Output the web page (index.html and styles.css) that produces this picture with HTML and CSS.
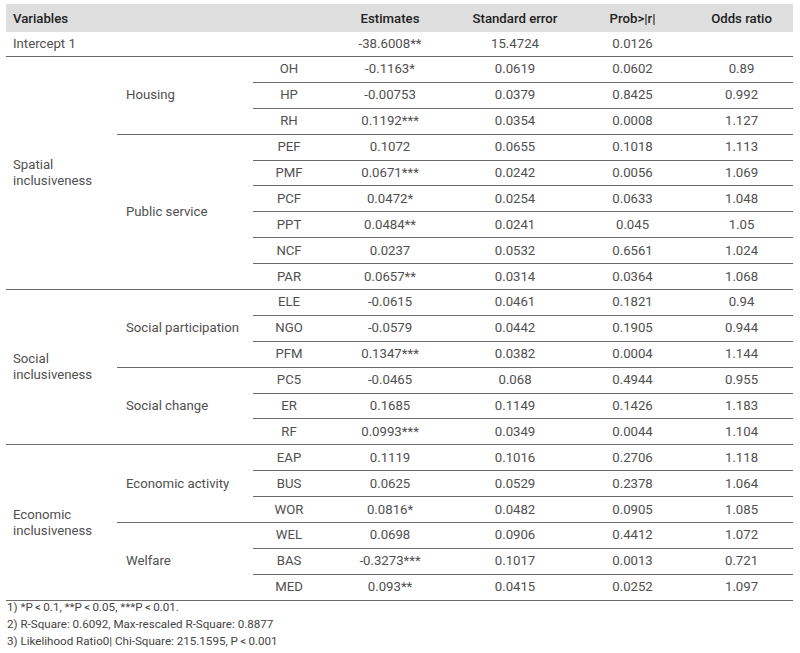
FILE: index.html
```html
<!DOCTYPE html>
<html>
<head>
<meta charset="utf-8">
<link rel="stylesheet" href="styles.css">
</head>
<body>
<table class="reg">
  <colgroup>
    <col class="c1"><col class="c2"><col class="c3"><col class="c4"><col class="c5"><col class="c6"><col class="c7">
  </colgroup>
  <thead>
    <tr class="head">
      <th class="left" colspan="3">Variables</th>
      <th>Estimates</th>
      <th>Standard error</th>
      <th>Prob&gt;|r|</th>
      <th>Odds ratio</th>
    </tr>
  </thead>
  <tbody>
    <tr class="icpt">
      <td class="left" colspan="3">Intercept 1</td>
      <td>-38.6008**</td><td>15.4724</td><td>0.0126</td><td></td>
    </tr>

    <tr><td class="grp" rowspan="9">Spatial<br>inclusiveness</td><td class="sub" rowspan="3">Housing</td>
      <td>OH</td><td>-0.1163*</td><td>0.0619</td><td>0.0602</td><td>0.89</td></tr>
    <tr><td>HP</td><td>-0.00753</td><td>0.0379</td><td>0.8425</td><td>0.992</td></tr>
    <tr><td>RH</td><td>0.1192***</td><td>0.0354</td><td>0.0008</td><td>1.127</td></tr>
    <tr><td class="sub" rowspan="6">Public service</td>
      <td>PEF</td><td>0.1072</td><td>0.0655</td><td>0.1018</td><td>1.113</td></tr>
    <tr><td>PMF</td><td>0.0671***</td><td>0.0242</td><td>0.0056</td><td>1.069</td></tr>
    <tr><td>PCF</td><td>0.0472*</td><td>0.0254</td><td>0.0633</td><td>1.048</td></tr>
    <tr><td>PPT</td><td>0.0484**</td><td>0.0241</td><td>0.045</td><td>1.05</td></tr>
    <tr><td>NCF</td><td>0.0237</td><td>0.0532</td><td>0.6561</td><td>1.024</td></tr>
    <tr><td>PAR</td><td>0.0657**</td><td>0.0314</td><td>0.0364</td><td>1.068</td></tr>

    <tr><td class="grp" rowspan="6">Social<br>inclusiveness</td><td class="sub" rowspan="3">Social participation</td>
      <td>ELE</td><td>-0.0615</td><td>0.0461</td><td>0.1821</td><td>0.94</td></tr>
    <tr><td>NGO</td><td>-0.0579</td><td>0.0442</td><td>0.1905</td><td>0.944</td></tr>
    <tr><td>PFM</td><td>0.1347***</td><td>0.0382</td><td>0.0004</td><td>1.144</td></tr>
    <tr><td class="sub" rowspan="3">Social change</td>
      <td>PC5</td><td>-0.0465</td><td>0.068</td><td>0.4944</td><td>0.955</td></tr>
    <tr><td>ER</td><td>0.1685</td><td>0.1149</td><td>0.1426</td><td>1.183</td></tr>
    <tr><td>RF</td><td>0.0993***</td><td>0.0349</td><td>0.0044</td><td>1.104</td></tr>

    <tr><td class="grp" rowspan="6">Economic<br>inclusiveness</td><td class="sub" rowspan="3">Economic activity</td>
      <td>EAP</td><td>0.1119</td><td>0.1016</td><td>0.2706</td><td>1.118</td></tr>
    <tr><td>BUS</td><td>0.0625</td><td>0.0529</td><td>0.2378</td><td>1.064</td></tr>
    <tr><td>WOR</td><td>0.0816*</td><td>0.0482</td><td>0.0905</td><td>1.085</td></tr>
    <tr><td class="sub" rowspan="3">Welfare</td>
      <td>WEL</td><td>0.0698</td><td>0.0906</td><td>0.4412</td><td>1.072</td></tr>
    <tr><td>BAS</td><td>-0.3273***</td><td>0.1017</td><td>0.0013</td><td>0.721</td></tr>
    <tr><td>MED</td><td>0.093**</td><td>0.0415</td><td>0.0252</td><td>1.097</td></tr>
  </tbody>
</table>
<div class="notes">
  <p>1) *P&#8201;&lt;&#8201;0.1, **P&#8201;&lt;&#8201;0.05, ***P&#8201;&lt;&#8201;0.01.</p>
  <p>2) R-Square: 0.6092, Max-rescaled R-Square: 0.8877</p>
  <p>3) Likelihood Ratio0| Chi-Square: 215.1595, P&#8201;&lt;&#8201;0.001</p>
</div>
</body>
</html>
```
FILE: styles.css
```css
html, body {
  margin: 0;
  background: #ffffff;
}
body {
  padding: 4px 7px 0 6px;
  font-family: Roboto, "Liberation Sans", sans-serif;
  font-size: 13.2px;
  color: #505050;
}
.reg {
  width: 787px;
  border-collapse: collapse;
  table-layout: fixed;
}
.c1 { width: 111px; }
.c2 { width: 136px; }
.c3 { width: 72px; }
.c4 { width: 130px; }
.c5 { width: 120px; }
.c6 { width: 115px; }
.c7 { width: 103px; }

.reg th {
  background: #dedede;
  color: #222;
  font-weight: 500;
  height: 28px;
  padding: 0;
  text-align: center;
}
.reg th.left {
  text-align: left;
  padding-left: 7px;
}
.reg td {
  height: 24.9px;
  padding: 0;
  text-align: center;
  border-bottom: 1px solid #6a6a6a;
  line-height: 16px;
}
.reg tr.icpt td {
  height: 24px;
}
.reg td.left {
  text-align: left;
  padding-left: 7px;
}
.reg td.grp {
  text-align: left;
  padding-left: 7px;
}
.reg td.sub {
  text-align: left;
  padding-left: 9px;
}
.notes {
  margin-top: -2px;
  font-size: 11.6px;
  color: #444;
  padding-left: 1px;
}
.notes p {
  margin: 0;
  line-height: 17px;
}
```
